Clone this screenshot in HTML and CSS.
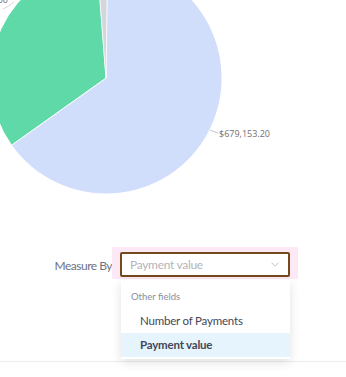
FILE: index.html
```html
<html>
<head>
  <link rel="stylesheet" href="styles.css">
</head>
<body>
  <div class="page">
    <div class="chart">
      <svg width="346" height="247" viewBox="0 0 346 247">
        <!-- slices -->
        <path d="M106 78 L107.4 -38 A116 116 0 1 1 11.5 145.2 Z" fill="#d0ddfb" stroke="#fff" stroke-width="1"/>
        <path d="M106 78 L11.5 145.2 A116 116 0 0 1 97.1 -37.7 Z" fill="#60d9a8" stroke="#fff" stroke-width="1"/>
        <path d="M106 78 L97.1 -37.7 A116 116 0 0 1 107.4 -38 Z" fill="#d3d6dd" stroke="#fff" stroke-width="0.6"/>
        <!-- labels -->
        <path d="M3 9 Q8 7 14 2" fill="none" stroke="#d8d8d8" stroke-width="1"/>
        <text x="8" y="3" text-anchor="end" class="chart-label">$12,300.00</text>
        <path d="M210 130 L218 133" fill="none" stroke="#c8c8c8" stroke-width="1"/>
        <text x="219" y="137" class="chart-label">$679,153.20</text>
      </svg>
    </div>
    <div class="measure-row">
      <span class="measure-label">Measure By</span>
      <div class="select-focus">
        <div class="select-box">
          <span class="select-value">Payment value</span>
          <svg class="chevron" width="8" height="5" viewBox="0 0 8 5">
            <path d="M0.5 0.6 L4 4.2 L7.5 0.6" fill="none" stroke="#c4c4c8" stroke-width="1"/>
          </svg>
        </div>
        <div class="menu">
          <div class="menu-header">Other fields</div>
          <div class="menu-item">Number of Payments</div>
          <div class="menu-item active">Payment value</div>
        </div>
      </div>
    </div>
    <div class="footer-line"></div>
  </div>
</body>
</html>
```

FILE: styles.css
```css
* {
  box-sizing: border-box;
  margin: 0;
  padding: 0;
}

body {
  background-color: #fff;
  font-family: Lato, "Open Sans", sans-serif;
}

.page {
  width: 346px;
  height: 377px;
  overflow: hidden;
}

.chart {
  height: 247px;
}

.chart svg {
  display: block;
}

.chart-label {
  font-family: "Open Sans", sans-serif;
  font-size: 9px;
  fill: #707070;
}

.measure-row {
  display: flex;
  align-items: center;
  height: 32px;
}

.measure-label {
  width: 113px;
  text-align: right;
  padding-right: 1px;
  font-size: 12px;
  letter-spacing: -0.5px;
  color: #6e7283;
  padding-top: 4px;
}

.select-focus {
  position: relative;
  background-color: #fde9f6;
  padding: 5px 8px 2px 8px;
  width: 186px;
  margin-left: -1px;
}

.select-box {
  display: flex;
  align-items: center;
  justify-content: space-between;
  height: 25px;
  border: 2px solid #744a1d;
  border-radius: 2px;
  background-color: #fff;
  padding: 0 9px 0 8px;
}

.select-value {
  font-size: 12px;
  letter-spacing: -0.3px;
  color: #b4b4ba;
}

.chevron {
  display: block;
}

.menu {
  position: absolute;
  top: calc(100% + 1px);
  left: 9px;
  width: 169px;
  background-color: #fff;
  box-shadow: 0 3px 10px rgba(0, 0, 0, 0.12);
  padding: 4px 0 2px 0;
}

.menu-header {
  height: 25px;
  line-height: 25px;
  padding-left: 10px;
  font-size: 9.5px;
  color: #8b8e98;
}

.menu-item {
  height: 24px;
  line-height: 24px;
  padding-left: 19px;
  font-size: 11.5px;
  letter-spacing: -0.2px;
  color: #424757;
}

.menu-item.active {
  background-color: #e6f4fe;
  font-weight: bold;
}

.footer-line {
  margin-top: 82px;
  border-top: 1px solid #ececec;
}
```
